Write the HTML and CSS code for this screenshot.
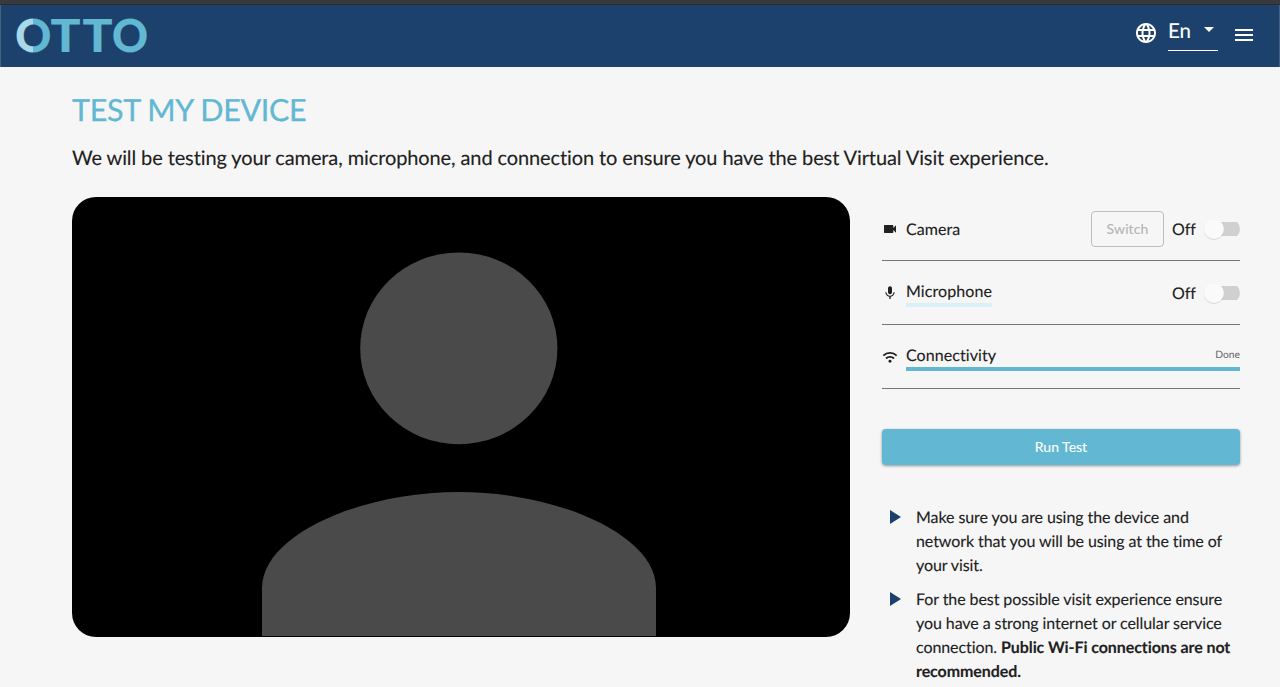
FILE: index.html
```html
<!DOCTYPE html>
<html lang="en">
<head>
<meta charset="utf-8">
<title>Test My Device</title>
<link rel="stylesheet" href="styles.css">
</head>
<body>
<div class="chrome"></div>
<header class="bar">
  <svg class="logo" width="140" height="48" viewBox="0 0 140 48" role="img" aria-label="OTTO">
    <defs><linearGradient id="half"><stop offset=".5" stop-color="#a9d9e8"/><stop offset=".5" stop-color="#62b8d3"/></linearGradient></defs>
    <text class="mark light" y="36" x="0.2" textLength="36" lengthAdjust="spacingAndGlyphs">O</text>
    <text class="mark" y="36" x="35.600" textLength="30" lengthAdjust="spacingAndGlyphs">T</text>
    <text class="mark" y="36" x="67.600" textLength="30" lengthAdjust="spacingAndGlyphs">T</text>
    <text class="mark" y="36" x="97" textLength="36" lengthAdjust="spacingAndGlyphs">O</text>
  </svg>
  <nav class="tools">
    <svg class="globe" width="24" height="24" viewBox="0 0 24 24"><path d="M11.99 2C6.47 2 2 6.48 2 12s4.47 10 9.99 10C17.52 22 22 17.52 22 12S17.52 2 11.99 2zm6.93 6h-2.95c-.32-1.25-.78-2.45-1.38-3.56 1.84.63 3.37 1.91 4.33 3.56zM12 4.04c.83 1.2 1.48 2.53 1.91 3.96h-3.82c.43-1.43 1.08-2.76 1.91-3.96zM4.26 14C4.1 13.36 4 12.69 4 12s.1-1.36.26-2h3.38c-.08.66-.14 1.32-.14 2s.06 1.34.14 2H4.26zm.82 2h2.95c.32 1.25.78 2.45 1.38 3.56-1.84-.63-3.37-1.9-4.33-3.56zm2.95-8H5.08c.96-1.66 2.49-2.93 4.33-3.56C8.81 5.55 8.35 6.75 8.03 8zM12 19.96c-.83-1.2-1.48-2.53-1.91-3.96h3.82c-.43 1.43-1.08 2.76-1.91 3.96zM14.34 14H9.66c-.09-.66-.16-1.32-.16-2s.07-1.35.16-2h4.68c.09.65.16 1.32.16 2s-.07 1.34-.16 2zm.25 5.56c.6-1.11 1.06-2.31 1.38-3.56h2.95c-.96 1.65-2.49 2.93-4.33 3.56zM16.36 14c.08-.66.14-1.32.14-2s-.06-1.34-.14-2h3.38c.16.64.26 1.31.26 2s-.1 1.36-.26 2h-3.38z"/></svg>
    <div class="lang"><span>En</span><svg width="10" height="5" viewBox="0 0 10 5"><path d="M0 0h10L5 5z"/></svg></div>
    <svg class="menu" width="24" height="24" viewBox="0 0 24 24"><path d="M3 18h18v-2H3v2zm0-5h18v-2H3v2zm0-7v2h18V6H3z"/></svg>
  </nav>
</header>
<main class="page">
  <h1 class="title">TEST MY DEVICE</h1>
  <p class="intro">We will be testing your camera, microphone, and connection to ensure you have the best Virtual Visit experience.</p>
  <div class="columns">
    <section class="video">
      <svg class="avatar" width="778" height="440" viewBox="0 0 778 440"><ellipse cx="386.8" cy="151.3" rx="98.6" ry="95.9"/><path d="M190 439V391C190 338 288 295 387 295S584 338 584 391V439Z"/></svg>
    </section>
    <aside class="panel">
      <div class="row">
        <svg class="icon" width="16" height="16" viewBox="0 0 24 24"><path d="M17 10.5V7c0-.55-.45-1-1-1H4c-.55 0-1 .45-1 1v10c0 .55.45 1 1 1h12c.55 0 1-.45 1-1v-3.500l4 4v-11l-4 4z"/></svg>
        <span class="label">Camera</span>
        <button class="switch">Switch</button>
        <span class="state">Off</span>
        <span class="toggle"></span>
      </div>
      <div class="row">
        <svg class="icon" width="16" height="16" viewBox="0 0 24 24"><path d="M12 14c1.660 0 2.990-1.340 2.990-3L15 5c0-1.660-1.340-3-3-3S9 3.340 9 5v6c0 1.660 1.340 3 3 3zm5.300-3c0 3-2.540 5.100-5.300 5.100S6.700 14 6.700 11H5c0 3.410 2.720 6.230 6 6.720V21h2v-3.280c3.280-.48 6-3.300 6-6.720h-1.700z"/></svg>
        <span class="label level">Microphone</span>
        <span class="state">Off</span>
        <span class="toggle"></span>
      </div>
      <div class="row">
        <svg class="icon" width="16" height="16" viewBox="0 0 24 24"><g class="waves"><path d="M2 10a14.200 14.200 0 0 1 20 0M6 14.200a8.600 8.600 0 0 1 12 0"/></g><circle cx="12" cy="18.500" r="2.200"/></svg>
        <div class="progress"><span>Connectivity</span><small>Done</small></div>
      </div>
      <button class="run">Run Test</button>
      <ul class="tips">
        <li><svg class="arrow" width="11" height="14" viewBox="0 0 11 14"><path d="M0 0l11 7-11 7z"/></svg><p>Make sure you are using the device and network that you will be using at the time of your visit.</p></li>
        <li><svg class="arrow" width="11" height="14" viewBox="0 0 11 14"><path d="M0 0l11 7-11 7z"/></svg><p>For the best possible visit experience ensure you have a strong internet or cellular service connection. <b>Public Wi-Fi connections are not recommended.</b></p></li>
      </ul>
    </aside>
  </div>
</main>
</body>
</html>
```
FILE: styles.css
```css
* { box-sizing: border-box; }
body { margin: 0; height: 687px; overflow: hidden; background: #f6f6f6; color: #212121; font-family: Lato, sans-serif; font-size: 16px; line-height: 24px; font-variant-ligatures: none; text-rendering: geometricPrecision; -webkit-text-stroke: .12px; }
svg { display: block; flex: none; }
h1, p, ul { margin: 0; padding: 0; }
button { font: inherit; }
.chrome { height: 5px; background: #38393d; border-bottom: 1px solid #292b2e; }
.bar { height: 62px; background: #1c416c; border-left: 1px solid #45637f; border-right: 1px solid #45637f; display: flex; justify-content: space-between; padding: 11px 23px 0 14px; }
.logo { overflow: visible; }
.mark { font-family: Lato, sans-serif; font-weight: 900; font-size: 45.5px; fill: #62b8d3; stroke: #62b8d3; stroke-width: .2px; -webkit-text-stroke: 0; }
.light { fill: url(#half); stroke: url(#half); }
.tools { display: flex; fill: #fff; color: #fff; }
.globe { margin: 5px 10px 0 0; }
.lang { width: 50px; height: 35px; border-bottom: 1px solid #fff; display: flex; justify-content: space-between; font-size: 20.5px; padding: 3px 4px 0 0; }
.lang svg { margin-top: 8px; }
.menu { margin: 7px 0 0 14px; }
.page { padding: 24px 40px 0 72px; }
.title { font-size: 30.5px; font-weight: 400; line-height: 38px; color: #62b8d3; letter-spacing: -.34px; -webkit-text-stroke: .3px; }
.intro { font-size: 20px; line-height: 32px; margin-top: 13px; letter-spacing: -.105px; white-space: nowrap; }
.columns { display: flex; gap: 32px; margin-top: 23px; }
.video { width: 778px; height: 440px; border-radius: 24px; background: #000; overflow: hidden; }
.avatar { fill: #4a4a4a; }
.panel { width: 358px; }
.row { height: 64px; border-bottom: 1px solid #757575; display: flex; align-items: center; }
.row .icon { fill: #212121; margin-right: 8px; }
.waves { fill: none; stroke: #212121; stroke-width: 2.8; }
.label { margin-right: auto; padding-top: 2px; letter-spacing: .08px; }
.level { height: 28px; border-bottom: 4px solid #dbeff6; padding-top: 1px; }
.switch { width: 73px; height: 36px; border: 1px solid #bdbdbd; border-radius: 4px; background: transparent; color: #b5b5b5; font-size: 14px; padding: 0; letter-spacing: .1px; margin-right: 8px; }
.state { width: 24px; padding-top: 2px; }
.toggle { width: 35px; height: 20px; margin-left: 9px; background: linear-gradient(#d0d0d0, #d0d0d0) right center / 28px 14px no-repeat; border-radius: 10px; display: flex; }
.toggle::before { content: ""; width: 20px; height: 20px; margin-left: -1px; border-radius: 50%; background: #fafafa; box-shadow: 0 1px 1px rgba(0,0,0,.12); }
.progress { flex: 1; height: 28px; padding-top: 1px; border-bottom: 4px solid #62b8d3; display: flex; justify-content: space-between; letter-spacing: .08px; }
.progress small { font-size: 10.3px; line-height: 22px; color: #666; letter-spacing: 0; -webkit-text-stroke: 0; }
.run { display: block; width: 358px; height: 36px; margin-top: 40px; border: 0; border-radius: 4px; background: #62b8d3; color: #fff; font-size: 14px; box-shadow: 0 1px 3px rgba(0,0,0,.4); }
.tips { list-style: none; margin-top: 40px; padding-left: 8px; display: grid; gap: 9px; letter-spacing: -.08px; }
.tips li { display: flex; gap: 15px; }
.tips p { padding-top: 1px; }
.arrow { fill: #1c416c; margin-top: 5px; }
```
